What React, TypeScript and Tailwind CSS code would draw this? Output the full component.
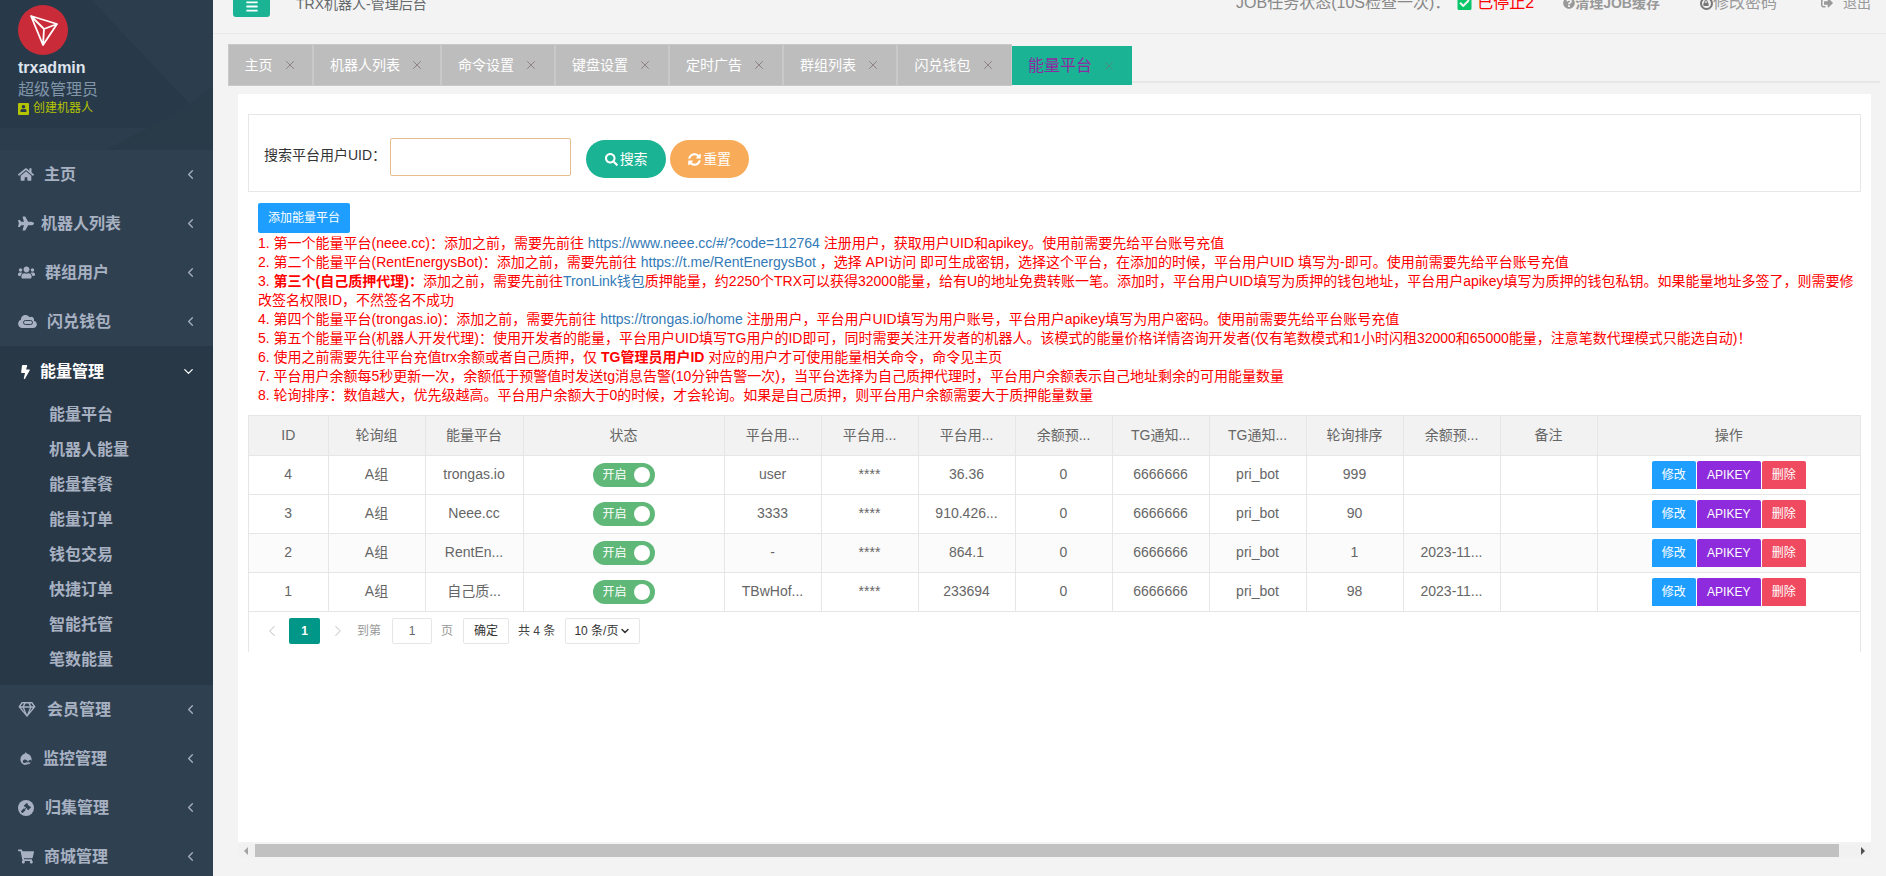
import { FaHome, FaPlane, FaUsers, FaBolt, FaRegGem, FaDrupal, FaShoppingCart, FaSearch, FaSyncAlt, FaCheckSquare, FaQuestionCircle, FaSignOutAlt, FaBars, FaCloud, FaGavel, FaLock, FaUser } from 'react-icons/fa'
import { ChevronDown, ChevronLeft, ChevronRight, X } from 'lucide-react'
import type { ComponentType, ReactNode } from 'react'

const fontStack = "font-['Liberation_Sans','Noto_Sans_CJK_SC',sans-serif]"

const tabs = ['主页', '机器人列表', '命令设置', '键盘设置', '定时广告', '群组列表', '闪兑钱包']
const tabWidths = ['w-[85px]', 'w-[128px]', 'w-[114px]', 'w-[114px]', 'w-[114px]', 'w-[114px]', 'w-[113px]']

const subMenu = ['能量平台', '机器人能量', '能量套餐', '能量订单', '钱包交易', '快捷订单', '智能托管', '笔数能量']

const columns = [
  { name: 'ID', width: 'w-[79px]' },
  { name: '轮询组', width: 'w-[97px]' },
  { name: '能量平台', width: 'w-[98px]' },
  { name: '状态', width: 'w-[201px]' },
  { name: '平台用...', width: 'w-[97px]' },
  { name: '平台用...', width: 'w-[97px]' },
  { name: '平台用...', width: 'w-[97px]' },
  { name: '余额预...', width: 'w-[97px]' },
  { name: 'TG通知...', width: 'w-[97px]' },
  { name: 'TG通知...', width: 'w-[97px]' },
  { name: '轮询排序', width: 'w-[97px]' },
  { name: '余额预...', width: 'w-[97px]' },
  { name: '备注', width: 'w-[97px]' },
  { name: '操作', width: 'w-[263px]' },
]

const rows = [
  { id: '4', platform: 'trongas.io', uid: 'user', balance: '36.36', sort: '999', time: '' },
  { id: '3', platform: 'Neee.cc', uid: '3333', balance: '910.426...', sort: '90', time: '' },
  { id: '2', platform: 'RentEn...', uid: '-', balance: '864.1', sort: '1', time: '2023-11...' },
  { id: '1', platform: '自己质...', uid: 'TBwHof...', balance: '233694', sort: '98', time: '2023-11...' },
]

function TronLogo() {
  return (
    <svg viewBox="0 0 50 50" className="h-[50px] w-[50px]">
      <circle cx="25" cy="25" r="25" fill="#c92c38" />
      <path d="M13 11 L39 19 L25 40 Z M13 11 L26 24 L39 19 M26 24 L25 40" fill="none" stroke="#fff" strokeWidth="1.8" strokeLinejoin="round" />
    </svg>
  )
}

function InfinityCloud() {
  return (
    <span className="relative inline-flex h-[15px] w-[19px] shrink-0">
      <FaCloud className="h-[15px] w-[19px]" />
      <span className="absolute left-[5px] top-[6px] h-[5px] w-[10px] rounded-full border border-[#2f4050]" />
    </span>
  )
}

function GavelCircle() {
  return (
    <span className="flex h-[16px] w-[16px] shrink-0 items-center justify-center rounded-full bg-[#a7b1c2]">
      <FaGavel className="h-[10px] w-[10px] text-[#2f4050]" />
    </span>
  )
}

function MenuItem({ icon: Icon, label, gap, iconClass }: { icon: ComponentType<{ className?: string }>; label: string; gap: string; iconClass?: string }) {
  return (
    <div className="flex h-[49px] shrink-0 items-center pl-[18px] pr-[15px] text-[#a7b1c2]">
      <Icon className={iconClass ?? 'h-[15px] w-[16px] shrink-0'} />
      <span className={`${gap} text-[16px] font-bold`}>{label}</span>
      <ChevronLeft className="ml-auto h-[15px] w-[15px]" />
    </div>
  )
}

function Sidebar() {
  return (
    <aside className="flex w-[213px] shrink-0 flex-col overflow-hidden bg-[#2f4050]">
      <div className="relative h-[150px] shrink-0">
        <svg className="absolute inset-0 h-full w-full" viewBox="0 0 213 150" preserveAspectRatio="none">
          <polygon points="0,0 92,0 190,104 148,128 0,128" fill="#283a4a" />
          <polygon points="92,0 213,0 213,86 190,104" fill="#2c3d4d" />
          <polygon points="0,128 148,128 105,150 0,150" fill="#2c3e4e" />
          <polygon points="148,128 190,104 213,86 213,150 105,150" fill="#293a49" />
        </svg>
        <div className="relative flex flex-col pl-[18px] pt-[5px]">
          <TronLogo />
          <span className="mt-[3px] text-[16px] font-bold leading-[20px] text-[#dfe4ed]">trxadmin</span>
          <span className="mt-[1px] text-[16px] leading-[21px] text-[#8095a8]">超级管理员</span>
          <span className="flex items-center gap-[4px] text-[12px] leading-[17px] text-[#b5c400]">
            <span className="flex h-[12px] w-[11px] items-center justify-center rounded-[1px] bg-[#b5c400]">
              <FaUser className="h-[7px] w-[7px] text-[#26384a]" />
            </span>
            创建机器人
          </span>
        </div>
      </div>

      <MenuItem icon={FaHome} label="主页" gap="ml-[10px]" />
      <MenuItem icon={FaPlane} label="机器人列表" gap="ml-[7px]" />
      <MenuItem icon={FaUsers} label="群组用户" gap="ml-[10px]" iconClass="h-[15px] w-[17px] shrink-0" />
      <MenuItem icon={InfinityCloud} label="闪兑钱包" gap="ml-[10px]" />

      <div className="shrink-0 bg-[#293846] pb-[8px]">
        <div className="flex h-[51px] items-center pl-[21px] pr-[17px] text-white">
          <FaBolt className="h-[14px] w-[9px]" />
          <span className="ml-[10px] text-[16px] font-bold">能量管理</span>
          <ChevronDown className="ml-auto h-[15px] w-[15px]" />
        </div>
        {subMenu.map((item) => (
          <div key={item} className="flex h-[35px] items-center pl-[49px] text-[16px] font-bold text-[#a7b1c2]">
            {item}
          </div>
        ))}
      </div>

      <MenuItem icon={FaRegGem} label="会员管理" gap="ml-[11px]" iconClass="h-[15px] w-[18px] shrink-0" />
      <MenuItem icon={FaDrupal} label="监控管理" gap="ml-[9px]" />
      <MenuItem icon={GavelCircle} label="归集管理" gap="ml-[11px]" />
      <MenuItem icon={FaShoppingCart} label="商城管理" gap="ml-[10px]" />
    </aside>
  )
}

function TopBar() {
  return (
    <header className="flex h-[34px] shrink-0 items-end overflow-hidden border-b border-[#e7eaec] pb-[16px] pl-[20px] pr-[15px]">
      <div className="flex h-[34px] w-[37px] shrink-0 items-end justify-center rounded-[3px] bg-[#1ab394] pb-[4px] text-white">
        <FaBars className="h-[13px] w-[12px]" />
      </div>
      <span className="ml-[26px] mb-[2px] text-[14px] text-[#676a6c]">TRX机器人-管理后台</span>
      <div className="mb-[2px] ml-auto flex items-center text-[#888]">
        <span className="text-[16px]">{'JOB任务状态(10S检查一次)\uFF1A'}</span>
        <FaCheckSquare className="ml-[7px] h-[16px] w-[15px] text-[#06c668]" />
        <span className="ml-[5px] text-[16px] text-[#ff0000]">已停止2</span>
        <FaQuestionCircle className="ml-[29px] h-[12px] w-[12px] text-[#999]" />
        <span className="text-[14px] font-bold text-[#999]">清理JOB缓存</span>
        <span className="ml-[40px] flex h-[13px] w-[13px] items-center justify-center rounded-full border-2 border-[#777]">
          <FaLock className="h-[6px] w-[6px] text-[#777]" />
        </span>
        <span className="text-[16px] text-[#999]">修改密码</span>
        <FaSignOutAlt className="ml-[44px] h-[12px] w-[12px] text-[#999]" />
        <span className="ml-[10px] text-[14px] text-[#999]">退出</span>
      </div>
    </header>
  )
}

function TabBar() {
  return (
    <div className="mt-[10px] flex h-[42px] shrink-0 pl-[15px] pr-[6px]">
      <div className="flex border border-[#c9c9c9] bg-[#bdbdbd]">
        {tabs.map((tab, i) => (
          <div key={tab} className={`flex ${tabWidths[i]} items-center justify-center gap-[10px] border-r-2 border-[#c9c9c9] text-[14px] text-white last:border-r-0`}>
            {tab}
            <X className="h-[14px] w-[14px] text-[#7f7070]" strokeWidth={1.3} />
          </div>
        ))}
      </div>
      <div className="mt-[2px] flex h-[39px] w-[120px] items-center justify-center gap-[10px] bg-[#1ab394] text-[16px] text-[#8e2aa0]">
        能量平台
        <X className="h-[14px] w-[14px] text-[#5f7f78]" strokeWidth={1.3} />
      </div>
      <div className="h-[39px] flex-1 border-b-2 border-[#e7e7e7]" />
    </div>
  )
}

function Link({ children }: { children: ReactNode }) {
  return <span className="text-[#337ab7]">{children}</span>
}

function Notes() {
  return (
    <div className="mt-[1px] pl-[10px] pr-[16px] text-[14px] leading-[19px] text-[#ff0000]">
      <p>{'1. 第一个能量平台(neee.cc)\uFF1A添加之前\uFF0C需要先前往 '}<Link>https://www.neee.cc/#/?code=112764</Link>{' 注册用户\uFF0C获取用户UID和apikey。使用前需要先给平台账号充值'}</p>
      <p>{'2. 第二个能量平台(RentEnergysBot)\uFF1A添加之前\uFF0C需要先前往 '}<Link>https://t.me/RentEnergysBot</Link>{' \uFF0C选择 API访问 即可生成密钥\uFF0C选择这个平台\uFF0C在添加的时候\uFF0C平台用户UID 填写为-即可。使用前需要先给平台账号充值'}</p>
      <p>{'3. '}<b>{'第三个(自己质押代理)\uFF1A'}</b>{'添加之前\uFF0C需要先前往'}<Link>TronLink钱包</Link>{'质押能量\uFF0C约2250个TRX可以获得32000能量\uFF0C给有U的地址免费转账一笔。添加时\uFF0C平台用户UID填写为质押的钱包地址\uFF0C平台用户apikey填写为质押的钱包私钥。如果能量地址多签了\uFF0C则需要修改签名权限ID\uFF0C不然签名不成功'}</p>
      <p>{'4. 第四个能量平台(trongas.io)\uFF1A添加之前\uFF0C需要先前往 '}<Link>https://trongas.io/home</Link>{' 注册用户\uFF0C平台用户UID填写为用户账号\uFF0C平台用户apikey填写为用户密码。使用前需要先给平台账号充值'}</p>
      <p>{'5. 第五个能量平台(机器人开发代理)\uFF1A使用开发者的能量\uFF0C平台用户UID填写TG用户的ID即可\uFF0C同时需要关注开发者的机器人。该模式的能量价格详情咨询开发者(仅有笔数模式和1小时闪租32000和65000能量\uFF0C注意笔数代理模式只能选自动)\uFF01'}</p>
      <p>{'6. 使用之前需要先往平台充值trx余额或者自己质押\uFF0C仅 '}<b>TG管理员用户ID</b>{' 对应的用户才可使用能量相关命令\uFF0C命令见主页'}</p>
      <p>{'7. 平台用户余额每5秒更新一次\uFF0C余额低于预警值时发送tg消息告警(10分钟告警一次)\uFF0C当平台选择为自己质押代理时\uFF0C平台用户余额表示自己地址剩余的可用能量数量'}</p>
      <p>{'8. 轮询排序\uFF1A数值越大\uFF0C优先级越高。平台用户余额大于0的时候\uFF0C才会轮询。如果是自己质押\uFF0C则平台用户余额需要大于质押能量数量'}</p>
    </div>
  )
}

function Switch() {
  return (
    <div className="mx-auto flex h-[24px] w-[62px] items-center justify-between rounded-full bg-[#5fb878] pl-[10px] pr-[5px] text-[12px] text-white">
      开启
      <span className="h-[16px] w-[16px] rounded-full bg-white" />
    </div>
  )
}

function DataTable() {
  return (
    <div className="mt-[10px] w-[1613px] border-x border-t border-[#e6e6e6] pb-[8px]">
      <table className="w-[1611px] table-fixed border-collapse text-center text-[14px] text-[#666]">
        <colgroup>
          {columns.map((col, i) => (
            <col key={i} className={col.width} />
          ))}
        </colgroup>
        <thead>
          <tr className="h-[39px] bg-[#f2f2f2]">
            {columns.map((col, i) => (
              <th key={i} className="border-b border-l border-[#e6e6e6] font-normal first:border-l-0">
                {col.name}
              </th>
            ))}
          </tr>
        </thead>
        <tbody>
          {rows.map((row, idx) => (
            <tr key={row.id} className={`h-[39px] ${idx === 2 ? 'bg-[#fbfbfb]' : 'bg-white'}`}>
              <td className="border-b border-[#e6e6e6]">{row.id}</td>
              <td className="border-b border-l border-[#e6e6e6]">A组</td>
              <td className="border-b border-l border-[#e6e6e6]">{row.platform}</td>
              <td className="border-b border-l border-[#e6e6e6]"><Switch /></td>
              <td className="border-b border-l border-[#e6e6e6]">{row.uid}</td>
              <td className="border-b border-l border-[#e6e6e6]">****</td>
              <td className="border-b border-l border-[#e6e6e6]">{row.balance}</td>
              <td className="border-b border-l border-[#e6e6e6]">0</td>
              <td className="border-b border-l border-[#e6e6e6]">6666666</td>
              <td className="border-b border-l border-[#e6e6e6]">pri_bot</td>
              <td className="border-b border-l border-[#e6e6e6]">{row.sort}</td>
              <td className="border-b border-l border-[#e6e6e6]">{row.time}</td>
              <td className="border-b border-l border-[#e6e6e6]"></td>
              <td className="border-b border-l border-[#e6e6e6]">
                <div className="flex justify-center gap-[1px] text-[12px] text-white">
                  <span className="flex h-[28px] w-[44px] items-center justify-center rounded-t-[2px] bg-[#1e9fff]">修改</span>
                  <span className="flex h-[28px] w-[64px] items-center justify-center rounded-t-[2px] bg-[#8e2bdc]">APIKEY</span>
                  <span className="flex h-[28px] w-[44px] items-center justify-center rounded-t-[2px] bg-[#ef4a5f]">删除</span>
                </div>
              </td>
            </tr>
          ))}
        </tbody>
      </table>
      <div className="flex h-[32px] items-end pl-[14px] text-[12px] text-[#666]">
        <div className="flex h-[26px] items-center">
          <ChevronLeft className="h-[18px] w-[18px] text-[#c8c8c8]" strokeWidth={1.4} />
          <span className="ml-[8px] flex h-[26px] w-[31px] items-center justify-center rounded-[2px] bg-[#009688] font-bold text-white">1</span>
          <ChevronRight className="ml-[9px] h-[18px] w-[18px] text-[#c8c8c8]" strokeWidth={1.4} />
          <span className="ml-[10px] text-[#999]">到第</span>
          <span className="ml-[11px] flex h-[26px] w-[40px] items-center justify-center rounded-[2px] border border-[#e6e6e6]">1</span>
          <span className="ml-[9px] text-[#999]">页</span>
          <span className="ml-[10px] flex h-[26px] w-[46px] items-center justify-center rounded-[2px] border border-[#e6e6e6] text-[#333]">确定</span>
          <span className="ml-[9px] text-[#444]">共 4 条</span>
          <span className="ml-[10px] flex h-[26px] w-[75px] items-center justify-between rounded-[2px] border border-[#e6e6e6] px-[8px] text-[#333]">
            10 条/页
            <ChevronDown className="h-[12px] w-[12px]" strokeWidth={3} />
          </span>
        </div>
      </div>
    </div>
  )
}

function ContentPanel() {
  return (
    <div className="ml-[25px] mt-[8px] h-[748px] w-[1633px] shrink-0 bg-white pl-[10px] pt-[20px]">
      <div className="flex h-[78px] w-[1613px] items-center border border-[#e7e7e7] pl-[15px]">
        <span className="mt-[4px] text-[14px] text-[#333]">{'搜索平台用户UID\uFF1A'}</span>
        <div className="ml-[4px] mt-[8px] h-[38px] w-[181px] rounded-[2px] border border-[#e5be8c] bg-white" />
        <button className="ml-[15px] mt-[12px] flex h-[38px] w-[80px] items-center justify-center gap-[2px] rounded-full bg-[#1ab394] text-[14px] text-white">
          <FaSearch className="h-[13px] w-[13px]" />
          搜索
        </button>
        <button className="ml-[4px] mt-[12px] flex h-[38px] w-[79px] items-center justify-center gap-[2px] rounded-full bg-[#f8ac59] text-[14px] text-white">
          <FaSyncAlt className="h-[13px] w-[13px]" />
          重置
        </button>
      </div>
      <button className="ml-[10px] mt-[11px] flex h-[30px] w-[92px] items-center justify-center rounded-[2px] bg-[#1e9fff] text-[12px] text-white">
        添加能量平台
      </button>
      <Notes />
      <DataTable />
    </div>
  )
}

function ScrollBar() {
  return (
    <div className="ml-[25px] mt-[2px] flex h-[13px] w-[1633px] items-center bg-[#f1f1f1]">
      <span className="ml-[6px] h-0 w-0 border-y-[4px] border-r-[4px] border-y-transparent border-r-[#a3a3a3]" />
      <div className="ml-[7px] h-[13px] w-[1584px] bg-[#c1c1c1]" />
      <span className="ml-[22px] h-0 w-0 border-y-[4px] border-l-[4px] border-y-transparent border-l-[#505050]" />
    </div>
  )
}

export default function App() {
  return (
    <div className={`flex h-[876px] w-[1886px] overflow-hidden bg-[#f3f3f4] ${fontStack}`}>
      <Sidebar />
      <main className="flex min-w-0 flex-1 flex-col">
        <TopBar />
        <TabBar />
        <ContentPanel />
        <ScrollBar />
      </main>
    </div>
  )
}
